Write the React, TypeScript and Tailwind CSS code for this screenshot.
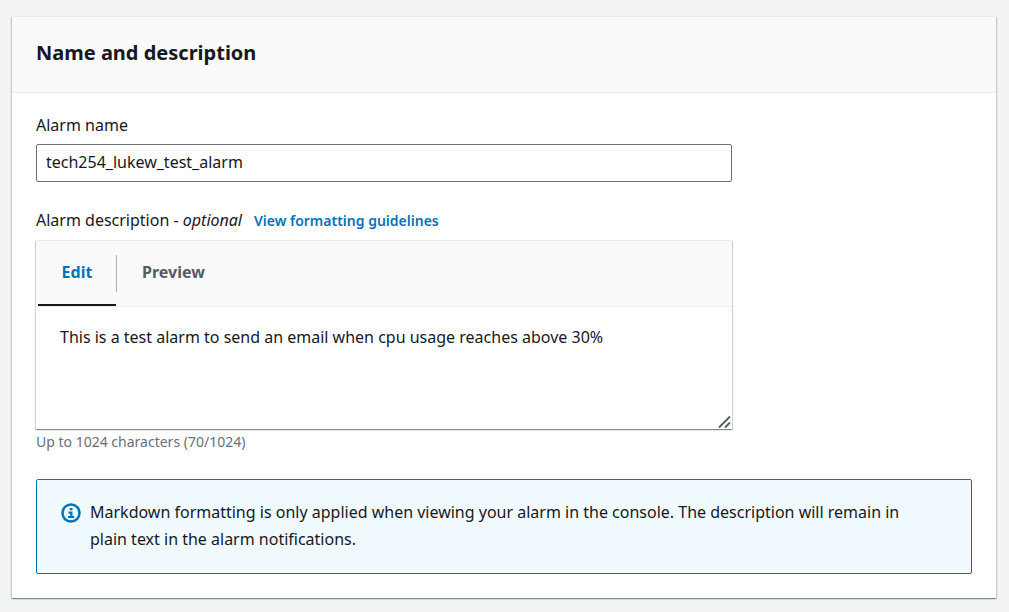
import { useState } from "react";

const MAX_LENGTH = 1024;

const raised =
  "shadow-[0_1px_1px_0_rgba(0,28,36,0.3),1px_1px_1px_0_rgba(0,28,36,0.15),-1px_1px_1px_0_rgba(0,28,36,0.15)]";

function InfoIcon() {
  return (
    <svg
      viewBox="0 0 16 16"
      className="mt-1 size-5 shrink-0"
      fill="none"
      stroke="#0073bb"
      strokeWidth="2"
      aria-hidden="true"
    >
      <circle cx="8" cy="8" r="6.8" />
      <path d="M5.6 11.2h5M8.3 11.2V7.6H6M7 4.8h2.2" strokeWidth="1.8" />
    </svg>
  );
}

function ResizeGrip() {
  return (
    <svg
      viewBox="0 0 14 14"
      className="pointer-events-none absolute right-0 bottom-0 size-[14px]"
      stroke="#545b64"
      strokeWidth="1.8"
      aria-hidden="true"
    >
      <path d="M1 12.5 12 1.5M7 12.5l5-5" />
    </svg>
  );
}

export default function App() {
  const [name, setName] = useState("tech254_lukew_test_alarm");
  const [text, setText] = useState(
    "This is a test alarm to send an email when cpu usage reaches above 30%",
  );
  const [tab, setTab] = useState<"edit" | "preview">("edit");

  return (
    <div className="min-h-screen bg-[#f2f3f3] py-4 pr-[13px] pl-3 font-['Noto_Sans',sans-serif] text-base leading-[27px] text-[#16191f]">
      <section className={`border-t border-[#eaeded] bg-white ${raised}`}>
        <header className="border-b border-[#eaeded] bg-[#fafafa] px-6 pt-5 pb-6">
          <h2 className="text-xl leading-[31px] font-bold">Name and description</h2>
        </header>
        <div className="px-6 pt-5 pb-6">
          <div className="max-w-[696px]">
            <label htmlFor="alarm-name" className="block leading-6">
              Alarm name
            </label>
            <input
              id="alarm-name"
              value={name}
              onChange={(e) => setName(e.target.value)}
              className="mt-[7px] block h-[38px] w-full rounded-xs border border-[#687078] bg-white px-[9px] pb-[2px] outline-none"
            />
            <div className="mt-[25px] flex items-baseline gap-3">
              <label htmlFor="alarm-description" className="whitespace-nowrap">
                Alarm description - <i>optional</i>
              </label>
              <a href="#guidelines" className="text-sm leading-5 font-semibold whitespace-nowrap text-[#0073bb]">
                View formatting guidelines
              </a>
            </div>
            <div className={`mt-[6px] border-t border-[#eaeded] bg-white ${raised}`}>
              <div role="tablist" className="flex h-[66px] border-b border-[#eaeded] bg-[#fafafa] pl-[2px]">
                <button
                  role="tab"
                  aria-selected={tab === "edit"}
                  onClick={() => setTab("edit")}
                  className={`min-w-[78px] border-b-2 px-[22px] font-bold ${tab === "edit" ? "border-[#16191f] text-[#0073bb]" : "border-transparent text-[#545b64]"}`}
                >
                  Edit
                </button>
                <span className="my-[14px] w-px bg-[#aab7b8]" />
                <button
                  role="tab"
                  aria-selected={tab === "preview"}
                  onClick={() => setTab("preview")}
                  className={`border-b-2 px-[25px] font-bold ${tab === "preview" ? "border-[#16191f] text-[#0073bb]" : "border-transparent text-[#545b64]"}`}
                >
                  Preview
                </button>
              </div>
              <div className="relative">
                <textarea
                  id="alarm-description"
                  maxLength={MAX_LENGTH}
                  value={text}
                  readOnly={tab === "preview"}
                  onChange={(e) => setText(e.target.value)}
                  className="block h-[122px] w-full resize-none px-6 py-[17px] outline-none"
                />
                <ResizeGrip />
              </div>
            </div>
            <p className="mt-[2px] text-sm leading-[22px] text-[#687078]">
              Up to {MAX_LENGTH} characters ({text.length}/{MAX_LENGTH})
            </p>
          </div>
          <div className="mt-[26px] flex gap-[9px] rounded-xs border border-[#0073bb] bg-[#f1faff] pt-[19px] pr-12 pb-5 pl-6">
            <InfoIcon />
            <p>
              Markdown formatting is only applied when viewing your alarm in the console. The description will remain in
              plain text in the alarm notifications.
            </p>
          </div>
        </div>
      </section>
    </div>
  );
}
